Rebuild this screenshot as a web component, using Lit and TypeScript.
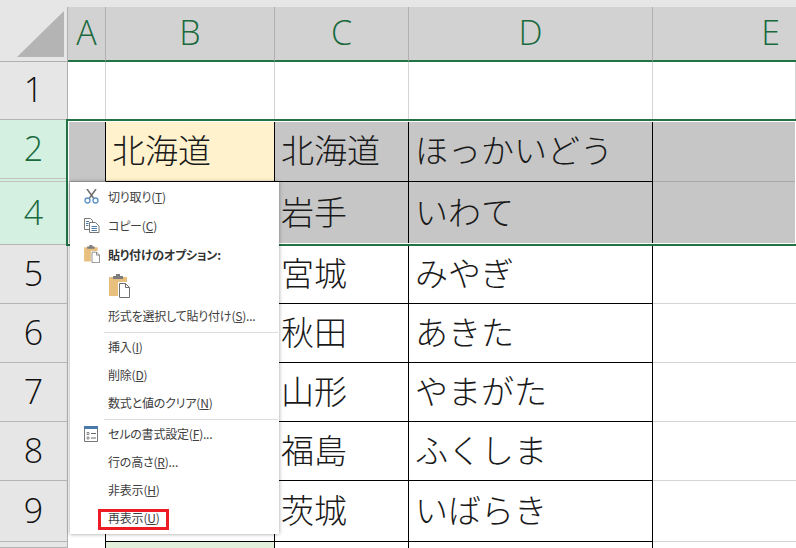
import { LitElement, html, css, svg } from "lit";
import { customElement } from "lit/decorators.js";

const colWidths = [38, 169, 134, 244, 143];
const rows = [
  { n: "1", h: 58, c: "", k: "", sel: false },
  { n: "2", h: 62, c: "北海道", k: "ほっかいどう", sel: true, b: "北海道" },
  { n: "4", h: 63, c: "岩手", k: "いわて", sel: true },
  { n: "5", h: 59, c: "宮城", k: "みやぎ", sel: false },
  { n: "6", h: 59, c: "秋田", k: "あきた", sel: false },
  { n: "7", h: 59, c: "山形", k: "やまがた", sel: false },
  { n: "8", h: 59, c: "福島", k: "ふくしま", sel: false },
  { n: "9", h: 61, c: "茨城", k: "いばらき", sel: false },
];

@customElement("app-root")
export class AppRoot extends LitElement {
  static styles = css`
    :host { display: block; width: 796px; height: 548px; position: relative; overflow: hidden; background: #fff;
      font-family: "Noto Sans CJK JP", "Liberation Sans", sans-serif; color: #111; }
    .sheet { display: grid; grid-template-columns: 68px 38px 169px 134px 244px 143px; grid-auto-rows: min-content; }
    .topstrip { grid-column: 1 / -1; height: 7px; background: #e6e6e6; }
    .corner { height: 55px; background: #e6e6e6; display: flex; align-items: flex-end; justify-content: flex-end; padding: 0 3px 4px 0; box-sizing: border-box; border-right: 1px solid #b0b0b0; border-bottom: 1px solid #b0b0b0;}
    .ch { height: 55px; box-sizing: border-box; background: #d2d2d2; color: #1a6a3e; border-right: 1px solid #b0b0b0; border-bottom: 2px solid #217346;
      display: flex; align-items: center; justify-content: center; font: 300 34px "Open Sans", "Liberation Sans", sans-serif; padding-bottom: 4px; }
    .ch.e { justify-content: flex-end; padding-right: 16px; border-right: 0; }
    .rh { background: #e6e6e6; border-bottom: 1px solid #b5b5b5; border-right: 1px solid #b0b0b0; box-sizing: border-box; display: flex; align-items: center; justify-content: center;
      font: 300 34px "Open Sans", "Liberation Sans", sans-serif; color: #111; padding-bottom: 3px; }
    .rh.sel { background: #d3f0e0; color: #1a6a3e; }
    .rh.hid { border-bottom: 4px double #c2c2c2; }
    .c { box-sizing: border-box; font-size: 33px; line-height: 1; display: flex; align-items: center; padding: 0 0 3px 6px; white-space: nowrap; font-weight: 300; color: #1a1a1a; }
    .c.blank { border-right: 1px solid #d4d4d4; border-bottom: 1px solid #d4d4d4; }
    .c.sel { background: #c6c6c6; }
    .c.bd { border-right: 1px solid #000; border-bottom: 1px solid #000; }
    .c.gr { border-right: 0; border-bottom: 1px solid #d4d4d4; }
    .c.gr.sel { border-bottom-color: #a9a9a9; }
    .c.rule { border-right: 1px solid #000; }
    .c.rule.sel { border-bottom: 1px solid #a9a9a9; }
    .c.active { background: #fff2cc; }
    .c.last { background: #e2efda; }
    .tail { height: 6px; }
    .selbox { position: absolute; left: 66px; top: 119px; width: 730px; height: 127px; box-sizing: border-box; border: 2px solid #217346; border-right: 0; pointer-events: none; box-shadow: inset 0 0 0 1px #fff; }
    .tri { display: block; }
    .menu { position: absolute; left: 70px; top: 182px; width: 209px; height: 352px; background: #fff; box-shadow: 0 0 4px rgba(0,0,0,.4); box-sizing: border-box; padding-top: 1px; font-size: 12px; font-feature-settings: "palt"; letter-spacing: -0.2px; }
    .item { height: 28px; box-sizing: border-box; display: flex; align-items: center; position: relative; padding: 0 0 2px 38px; white-space: nowrap; color: #404040; }
    .item.tall { height: 29px; }
    .item u { text-underline-offset: 1px; }
    .ico { position: absolute; left: 14px; top: 6px; }
    .ico.clipbox { top: 4px; line-height: 0; }
    .head { font-weight: 700; color: #333; }
    .big { height: 32px; padding-left: 39px; display: flex; align-items: center; }
    .sep { height: 1px; background: #dcdcdc; margin: 2px 1px 0 34px; }
    .mark { position: absolute; left: 98px; top: 509px; width: 71px; height: 21px; box-sizing: border-box; border: 3px solid #ed1c24; pointer-events: none; }
  `;

  private scissors() {
    return html`<svg class="ico" width="15" height="15" viewBox="0 0 15 15" fill="none"><path d="M3 0l6.500 9M12 0L5.500 9" stroke="#6e6e6e" stroke-width="1.500"/><circle cx="3.500" cy="11.500" r="2.500" stroke="#5b8fc7" stroke-width="1.300"/><circle cx="11.500" cy="11.500" r="2.500" stroke="#5b8fc7" stroke-width="1.300"/></svg>`;
  }
  private copy() {
    return html`<svg class="ico" width="16" height="15" viewBox="0 0 16 15" fill="#fff" stroke="#777" stroke-width="1"><path d="M.5.5h6l2 2v9h-8z"/><path d="M5.500 4.500h6l3.500 3.500v6.500H5.500z"/><path d="M2 3.500h3M2 5.500h2.500M2 7.500h2.500M7.500 8.500h5.500M7.500 10.500h5.500M7.500 12.500h5.500" stroke="#4a79ab"/></svg>`;
  }
  private clip(w: number, h: number) {
    return svg`<svg width="${w}" height="${h}" viewBox="0 0 21 24"><path d="M0 3h18v19H0z" fill="#e8bf7d"/><path d="M4 2h10v3H4z" fill="#7d7d7d"/><path d="M7 0h4v3H7z" fill="#7d7d7d"/><path d="M9 8h12v16H9z" fill="#fff"/><path d="M10.500 9.500h6l4 4v10h-10z" fill="#fff" stroke="#6f6f6f"/><path d="M16.500 9.500v4h4" fill="none" stroke="#6f6f6f"/></svg>`;
  }
  private fmt() {
    return html`<svg class="ico" width="14" height="16" viewBox="0 0 14 16"><path d="M.5.5h13v15H.5z" fill="#fff" stroke="#777"/><path d="M0 0h14v3H0z" fill="#4a79ab"/><path d="M3 6.500h2v2H3zM3 11h2v2H3z" fill="#fff" stroke="#666" stroke-width=".7"/><path d="M7 7.500h5M7 12h5" stroke="#666"/></svg>`;
  }

  render() {
    return html`
      <div class="sheet">
        <div class="topstrip"></div>
        <div class="corner"><svg class="tri" width="47" height="46" viewBox="0 0 47 46"><path d="M47 0v46H0z" fill="#b4b4b4"/></svg></div>
        ${["A", "B", "C", "D", "E"].map((l) => html`<div class="ch ${l === "E" ? "e" : ""}">${l}</div>`)}
        ${rows.map((r, i) => {
          const h = `height:${r.h}px`;
          if (i === 0) return html`
            <div class="rh" style=${h}>${r.n}</div>
            ${colWidths.map(() => html`<div class="c blank" style=${h}></div>`)}`;
          const s = r.sel ? "sel" : "";
          return html`
            <div class="rh ${s} ${i === 1 ? "hid" : ""}" style=${h}>${r.n}</div>
            <div class="c rule ${s}" style=${h}></div>
            <div class="c bd ${s} ${i === 1 ? "active" : ""}" style=${h}>${r.b ?? ""}</div>
            <div class="c bd ${s}" style=${h}>${r.c}</div>
            <div class="c bd ${s}" style=${h}>${r.k}</div>
            <div class="c gr ${s}" style=${h}></div>`;
        })}
        <div class="rh tail"></div>
        <div class="c rule tail"></div>
        <div class="c rule last tail"></div>
        <div class="c rule tail"></div>
        <div class="c rule tail"></div>
        <div class="c tail"></div>
      </div>
      <div class="selbox"></div>
      <div class="menu">
        <div class="item tall">${this.scissors()}切り取り(<u>T</u>)</div>
        <div class="item tall">${this.copy()}コピー(<u>C</u>)</div>
        <div class="item tall head"><span class="ico clipbox">${this.clip(16, 18)}</span>貼り付けのオプション:</div>
        <div class="big">${this.clip(21, 24)}</div>
        <div class="item">形式を選択して貼り付け(<u>S</u>)...</div>
        <div class="sep"></div>
        <div class="item">挿入(<u>I</u>)</div>
        <div class="item">削除(<u>D</u>)</div>
        <div class="item">数式と値のクリア(<u>N</u>)</div>
        <div class="sep"></div>
        <div class="item">${this.fmt()}セルの書式設定(<u>F</u>)...</div>
        <div class="item">行の高さ(<u>R</u>)...</div>
        <div class="item">非表示(<u>H</u>)</div>
        <div class="item">再表示(<u>U</u>)</div>
      </div>
      <div class="mark"></div>
    `;
  }
}
